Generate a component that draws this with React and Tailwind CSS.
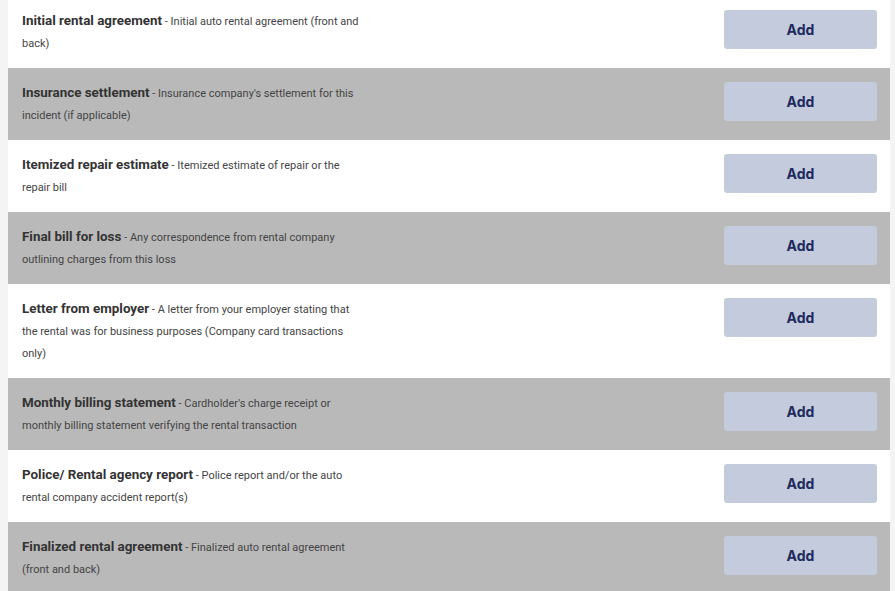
import React from "react";

const docs = [
  { title: "Initial rental agreement", desc: "Initial auto rental agreement (front and back)" },
  { title: "Insurance settlement", desc: "Insurance company's settlement for this incident (if applicable)" },
  { title: "Itemized repair estimate", desc: "Itemized estimate of repair or the repair bill" },
  { title: "Final bill for loss", desc: "Any correspondence from rental company outlining charges from this loss" },
  { title: "Letter from employer", desc: "A letter from your employer stating that the rental was for business purposes (Company card transactions only)" },
  { title: "Monthly billing statement", desc: "Cardholder's charge receipt or monthly billing statement verifying the rental transaction" },
  { title: "Police/ Rental agency report", desc: "Police report and/or the auto rental company accident report(s)" },
  { title: "Finalized rental agreement", desc: "Finalized auto rental agreement (front and back)" },
];

export default function App() {
  return (
    <div className="w-[895px] h-[591px] overflow-hidden bg-[#f4f4f4] pl-[8px] pr-[5px] font-['Roboto',sans-serif]">
      <div className="-mt-[4px] flex flex-col">
        {docs.map((d, i) => (
          <div
            key={d.title}
            className={`flex items-start justify-between pl-[14px] pr-[13px] pt-[15px] pb-[13px] ${
              i % 2 === 0 ? "bg-white" : "bg-[#b9b9b9]"
            }`}
          >
            <p className="w-[345px] text-[11px] leading-[22px] text-[#444]">
              <span className="text-[13.4px] leading-[0] font-bold text-[#333]">{d.title}</span> - {d.desc}
            </p>
            <button className="-mt-[1px] w-[153px] h-[39px] rounded-[3px] bg-[#c4cbdc] text-[14px] font-bold text-[#1f2a5e] font-['Inter',sans-serif]">
              Add
            </button>
          </div>
        ))}
      </div>
    </div>
  );
}
